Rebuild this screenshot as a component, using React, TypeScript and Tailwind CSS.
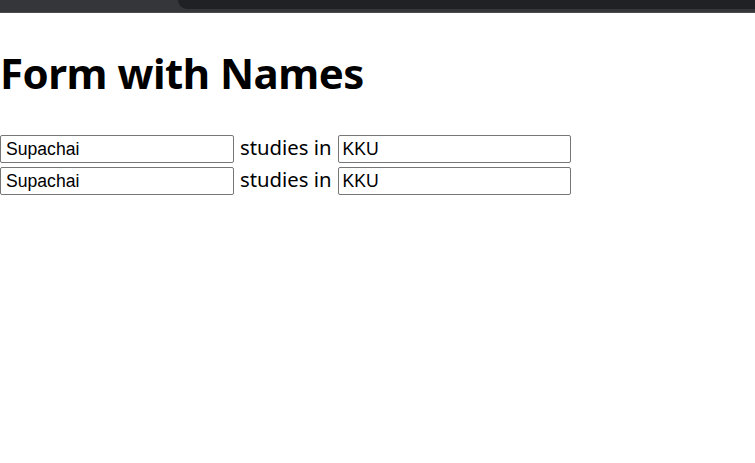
export default function App() {
  const rows = [0, 1];
  return (
    <div className="min-h-screen bg-white text-black">
      {/* leftover browser chrome at the top */}
      <div className="relative h-[13px] bg-[#35363a] border-b border-[#4a4b4f]">
        <div className="absolute left-[178px] right-0 top-0 h-[9px] rounded-bl-[10px] bg-[#202124]" />
      </div>

      <h1 className="mt-[33px] mb-[36px] h-[53px] leading-[53px] text-[42px] font-bold font-['Segoe_UI','Noto_Sans',sans-serif] tracking-[-0.5px]">
        Form with Names
      </h1>

      <div className="flex flex-col gap-[4px]">
        {rows.map((r) => (
          <div key={r} className="flex items-center h-[28px]">
            <input
              defaultValue="Supachai"
              className="w-[234px] h-[28px] border border-[#767676] rounded-[2px] pl-[5px] pr-[3px] text-[17.6px] font-['Liberation_Sans',Arial,sans-serif] text-black outline-none"
            />
            <span className="ml-[6px] mr-[7px] -mt-[3px] text-[20.3px] font-['Segoe_UI','Noto_Sans',sans-serif]">
              studies in
            </span>
            <input
              defaultValue="KKU"
              className="w-[233px] h-[28px] border border-[#767676] rounded-[2px] pl-[3px] pr-[3px] text-[17.6px] font-['Liberation_Sans',Arial,sans-serif] text-black outline-none"
            />
          </div>
        ))}
      </div>
    </div>
  );
}
